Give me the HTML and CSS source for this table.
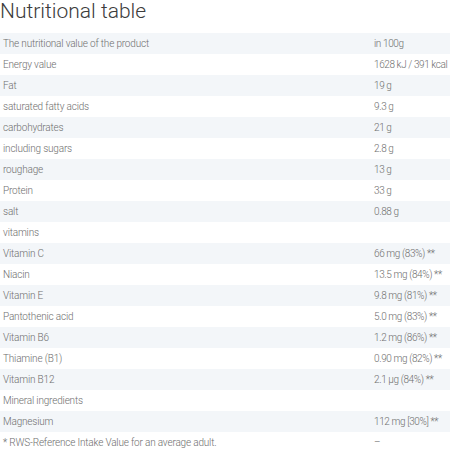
FILE: index.html
```html
<!DOCTYPE html>
<html lang="en">
<head>
<meta charset="utf-8">
<title>Nutritional table</title>
<link rel="stylesheet" href="styles.css">
</head>
<body>
<h2 class="title">Nutritional table</h2>
<table class="nutri">
<tbody>
<tr><td>The nutritional value of the product</td><td>in 100g</td></tr>
<tr><td>Energy value</td><td>1628 kJ / 391 kcal</td></tr>
<tr><td>Fat</td><td>19 g</td></tr>
<tr><td>saturated fatty acids</td><td>9.3 g</td></tr>
<tr><td>carbohydrates</td><td>21 g</td></tr>
<tr><td>including sugars</td><td>2.8 g</td></tr>
<tr><td>roughage</td><td>13 g</td></tr>
<tr><td>Protein</td><td>33 g</td></tr>
<tr><td>salt</td><td>0.88 g</td></tr>
<tr><td>vitamins</td><td></td></tr>
<tr><td>Vitamin C</td><td>66 mg (83%) **</td></tr>
<tr><td>Niacin</td><td>13.5 mg (84%) **</td></tr>
<tr><td>Vitamin E</td><td>9.8 mg (81%) **</td></tr>
<tr><td>Pantothenic acid</td><td>5.0 mg (83%) **</td></tr>
<tr><td>Vitamin B6</td><td>1.2 mg (86%) **</td></tr>
<tr><td>Thiamine (B1)</td><td>0.90 mg (82%) **</td></tr>
<tr><td>Vitamin B12</td><td>2.1 µg (84%) **</td></tr>
<tr><td>Mineral ingredients</td><td></td></tr>
<tr><td>Magnesium</td><td>112 mg [30%] **</td></tr>
<tr><td>* RWS-Reference Intake Value for an average adult.</td><td>–</td></tr>
</tbody>
</table>
</body>
</html>
```
FILE: styles.css
```css
html, body {
  margin: 0;
  padding: 0;
  background: #fff;
}
body {
  font-family: Roboto, "Liberation Sans", sans-serif;
  font-weight: 300;
  color: #6e6e6e;
}
.title {
  margin: -4px 0 0 0;
  font-size: 21px;
  font-weight: 300;
  line-height: 30px;
  color: #3c3c3c;
}
.nutri {
  margin-top: 7px;
  width: 456px;
  border-collapse: collapse;
  font-size: 10px;
  letter-spacing: -0.18px;
}
.nutri td {
  height: 21px;
  padding: 0 3px;
  vertical-align: middle;
  white-space: nowrap;
}
.nutri td:first-child {
  width: 365px;
}
.nutri td:last-child {
  letter-spacing: -0.4px;
}
.nutri tr:nth-child(odd) {
  background: #f3f6f9;
}
```
